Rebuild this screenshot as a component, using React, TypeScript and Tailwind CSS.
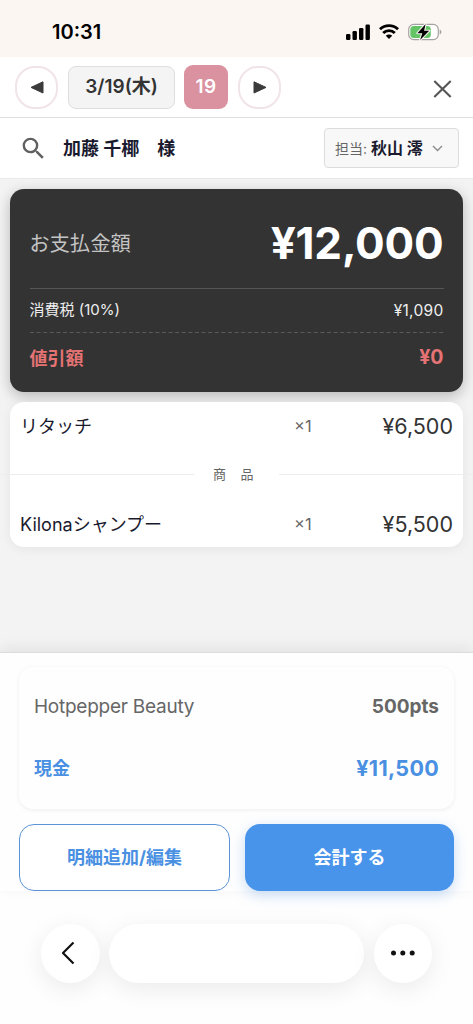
import { MdSearch } from 'react-icons/md'

const payments = [
  { label: 'Hotpepper Beauty', value: '500pts' },
  { label: '現金', value: '¥11,500', primary: true },
]

function StatusBar() {
  return (
    <div className="flex h-[57px] items-center justify-between bg-[#fcf6f3] pr-[31px] pl-[52px] pt-[7px]">
      <span className="text-[20px] leading-6 font-semibold text-black">10:31</span>
      <div className="flex items-center gap-[9px] pb-px">
        <svg width="24" height="16" viewBox="0 0 24 16" fill="#000">
          <rect x="0" y="10" width="4.4" height="6" rx="1.2" />
          <rect x="6.5" y="7" width="4.4" height="9" rx="1.2" />
          <rect x="13" y="4" width="4.4" height="12" rx="1.2" />
          <rect x="19.5" y="0.5" width="4.4" height="15.5" rx="1.2" />
        </svg>
        <svg width="20" height="15" viewBox="0 0 20 15">
          <g fill="none" stroke="#000" strokeWidth="2.9">
            <path d="M1 5.3a12.8 12.8 0 0 1 18 0" />
            <path d="M4.2 9.1a8.1 8.1 0 0 1 11.6 0" />
          </g>
          <path d="M10 14.9 6.8 11.8a4.6 4.6 0 0 1 6.4 0Z" fill="#000" />
        </svg>
        <svg width="34" height="18" viewBox="0 0 34 18">
          <rect x="0.7" y="1.4" width="29.6" height="15.2" rx="5" fill="#fff" stroke="#a5a3a1" strokeWidth="1.2" />
          <rect x="2.3" y="3" width="20.5" height="12" rx="3.5" fill="#65c466" />
          <path d="M31.7 6.5v5c1.1-.4 1.7-1.4 1.7-2.5s-.6-2.1-1.7-2.5Z" fill="#a5a3a1" />
          <path
            d="M17.6 1 9.4 10.2h4.9L12.1 17 21.2 7.8h-5.1Z"
            fill="#000"
            stroke="#fcf6f3"
            strokeWidth="2"
            strokeLinejoin="round"
            paintOrder="stroke"
          />
        </svg>
      </div>
    </div>
  )
}

function ArrowButton({ direction }: { direction: 'prev' | 'next' }) {
  return (
    <button className="flex size-[43px] items-center justify-center rounded-[20px] border-2 border-[#f1e4e8] bg-white">
      <svg width="14" height="13" viewBox="0 0 14 13" fill="#3b3b3b" stroke="#3b3b3b" strokeLinejoin="round">
        {direction === 'prev' ? <path d="M13 .8v11.2L1 6.4Z" /> : <path d="M1 .8v11.2L13 6.4Z" />}
      </svg>
    </button>
  )
}

function DateHeader() {
  return (
    <header className="flex h-[61px] items-center border-b border-[#dfdfdf] bg-white pr-[21px] pl-[15px]">
      <ArrowButton direction="prev" />
      <button className="ml-2.5 h-[43px] w-[107px] rounded-lg border border-[#dedede] bg-[#f4f4f4] pt-px text-[19px] font-semibold text-[#333]">
        3/19(木)
      </button>
      <span className="mr-2.5 ml-[9px] flex size-11 items-center justify-center rounded-[9px] bg-[#da91a0] text-[19px] font-semibold tracking-[0.5px] text-white">
        19
      </span>
      <ArrowButton direction="next" />
      <button className="ml-auto pt-1">
        <svg width="19" height="18" viewBox="0 0 19 18" fill="none" stroke="#555" strokeWidth="2.1">
          <path d="m1.3 1 16.4 16M17.7 1 1.3 17" />
        </svg>
      </button>
    </header>
  )
}

function CustomerRow() {
  return (
    <div className="flex h-[61px] items-center border-b border-[#e9e9e9] bg-white pr-[14px] pl-[19px]">
      <MdSearch className="mt-px size-[29px] text-[#606060]" />
      <span className="ml-[15px] text-[18px] font-bold whitespace-pre text-[#1a1a2e]">加藤 千椰　様</span>
      <button className="ml-auto flex h-10 w-[135px] items-center rounded border border-[#dcdcdc] bg-[#f8f8f8] pl-2.5">
        <span className="text-[14px] text-[#666]">担当:</span>
        <span className="ml-1 text-[16px] font-bold text-[#1a1a2e]">秋山 澪</span>
        <svg className="ml-[9px]" width="11" height="7" viewBox="0 0 11 7" fill="none" stroke="#8a8a8a" strokeWidth="1.4">
          <path d="m1 1 4.5 4.5L10 1" />
        </svg>
      </button>
    </div>
  )
}

function TotalCard() {
  return (
    <section className="mx-2.5 mt-[10px] h-[203px] rounded-[14px] bg-[#333] px-[19.5px] shadow-[0_4px_14px_rgba(0,0,0,0.25)]">
      <div className="flex h-[100px] items-center justify-between border-b border-[#565656] pt-2">
        <span className="pt-0.5 text-[20px] tracking-[0.3px] text-[#c4c4c4]">お支払金額</span>
        <span className="text-[44px] leading-none font-bold tracking-[-0.2px] text-white">¥12,000</span>
      </div>
      <div className="flex h-[43px] items-center justify-between text-[15px] text-[#eee]">
        <span>消費税 (10%)</span>
        <span className="text-[15.5px] tracking-[0.3px]">¥1,090</span>
      </div>
      <svg className="block w-full" height="1">
        <line x1="0" y1="0.5" x2="100%" y2="0.5" stroke="#5a5a5a" strokeDasharray="4 2.6" />
      </svg>
      <div className="flex h-[50px] items-center justify-between text-[18px] font-bold text-[#e57373]">
        <span>値引額</span>
        <span className="text-[19.5px]">¥0</span>
      </div>
    </section>
  )
}

function ItemRow({ name, price }: { name: string; price: string }) {
  return (
    <div className="flex h-[46px] items-center px-2.5 pt-0.5">
      <span className="w-[274px] text-[18px] text-[#1a1a2e]">{name}</span>
      <span className="text-[16.5px] text-[#666]">×1</span>
      <span className="ml-auto text-[21.5px] text-[#333]">{price}</span>
    </div>
  )
}

function ItemList() {
  return (
    <section className="mx-2.5 mt-2.5 h-[145px] rounded-[14px] bg-white shadow-[0_2px_12px_rgba(0,0,0,0.06)]">
      <ItemRow name="リタッチ" price="¥6,500" />
      {/* the divider runs past the card edges */}
      <div className="-mx-2.5 flex h-[52px] items-center pt-px">
        <span className="h-px flex-1 bg-[#ededed]" />
        <span className="w-[85px] pt-px pl-[19px] text-[13px] tracking-[14.5px] whitespace-nowrap text-[#666]">商品</span>
        <span className="h-px flex-1 bg-[#ededed]" />
      </div>
      <ItemRow name="Kilonaシャンプー" price="¥5,500" />
    </section>
  )
}

function PaymentPanel() {
  return (
    <section className="border-t border-[#dcdcdc] bg-[#fefefe] px-[19px] pt-[14px] shadow-[0_-4px_14px_rgba(0,0,0,0.07)]">
      <div className="h-[142px] rounded-[14px] bg-[#fefefe] px-[15px] pt-[10px] shadow-[0_1px_4px_rgba(0,0,0,0.07)]">
        {payments.map((p) => (
          <div
            key={p.label}
            className={
              p.primary
                ? 'flex h-[61px] items-center justify-between font-semibold text-[#4a90e2]'
                : 'flex h-[61px] items-center justify-between text-[#666]'
            }
          >
            <span className={p.primary ? 'text-[18px]' : 'text-[19px] tracking-[-0.25px]'}>{p.label}</span>
            <span className={p.primary ? 'text-[21.5px] font-bold tracking-[0.3px]' : 'text-[19px] font-bold'}>
              {p.value}
            </span>
          </div>
        ))}
      </div>
      <div className="mt-[15px] flex gap-[15px] text-[18px] font-bold">
        <button className="h-[67px] w-[211px] rounded-[15px] border border-[#5b93d6] bg-white text-[#4a90e2]">
          明細追加/編集
        </button>
        <button className="h-[67px] flex-1 rounded-[15px] bg-[#4994eb] text-white shadow-[0_4px_14px_rgba(74,144,226,0.3)]">
          会計する
        </button>
      </div>
    </section>
  )
}

function BrowserBar() {
  return (
    <nav className="flex flex-1 items-start gap-[9.5px] px-[41px] pt-[33px]">
      <button className="flex size-[58.5px] shrink-0 items-center justify-center rounded-full bg-white shadow-[0_6px_24px_rgba(0,0,0,0.08)]">
        <svg className="mr-1" width="14" height="24" viewBox="0 0 14 24" fill="none" stroke="#111" strokeWidth="2.2">
          <path d="M12.5 1.5 2 12l10.5 10.5" strokeLinejoin="round" />
        </svg>
      </button>
      <div className="h-[58.5px] flex-1 rounded-full bg-white shadow-[0_6px_24px_rgba(0,0,0,0.08)]" />
      <button className="flex size-[58.5px] shrink-0 items-center justify-center rounded-full bg-white shadow-[0_6px_24px_rgba(0,0,0,0.08)]">
        <svg width="26" height="6" viewBox="0 0 26 6" fill="#111">
          <circle cx="3.5" cy="3" r="2.5" />
          <circle cx="12.8" cy="3" r="2.5" />
          <circle cx="22.2" cy="3" r="2.5" />
        </svg>
      </button>
    </nav>
  )
}

export default function App() {
  return (
    <div className="flex h-screen flex-col overflow-hidden bg-[#fefefe] font-['Inter','Noto_Sans_CJK_JP',sans-serif]">
      <StatusBar />
      <DateHeader />
      <CustomerRow />
      <main className="h-[473px] bg-[#f3f3f3]">
        <TotalCard />
        <ItemList />
      </main>
      <PaymentPanel />
      <BrowserBar />
    </div>
  )
}
